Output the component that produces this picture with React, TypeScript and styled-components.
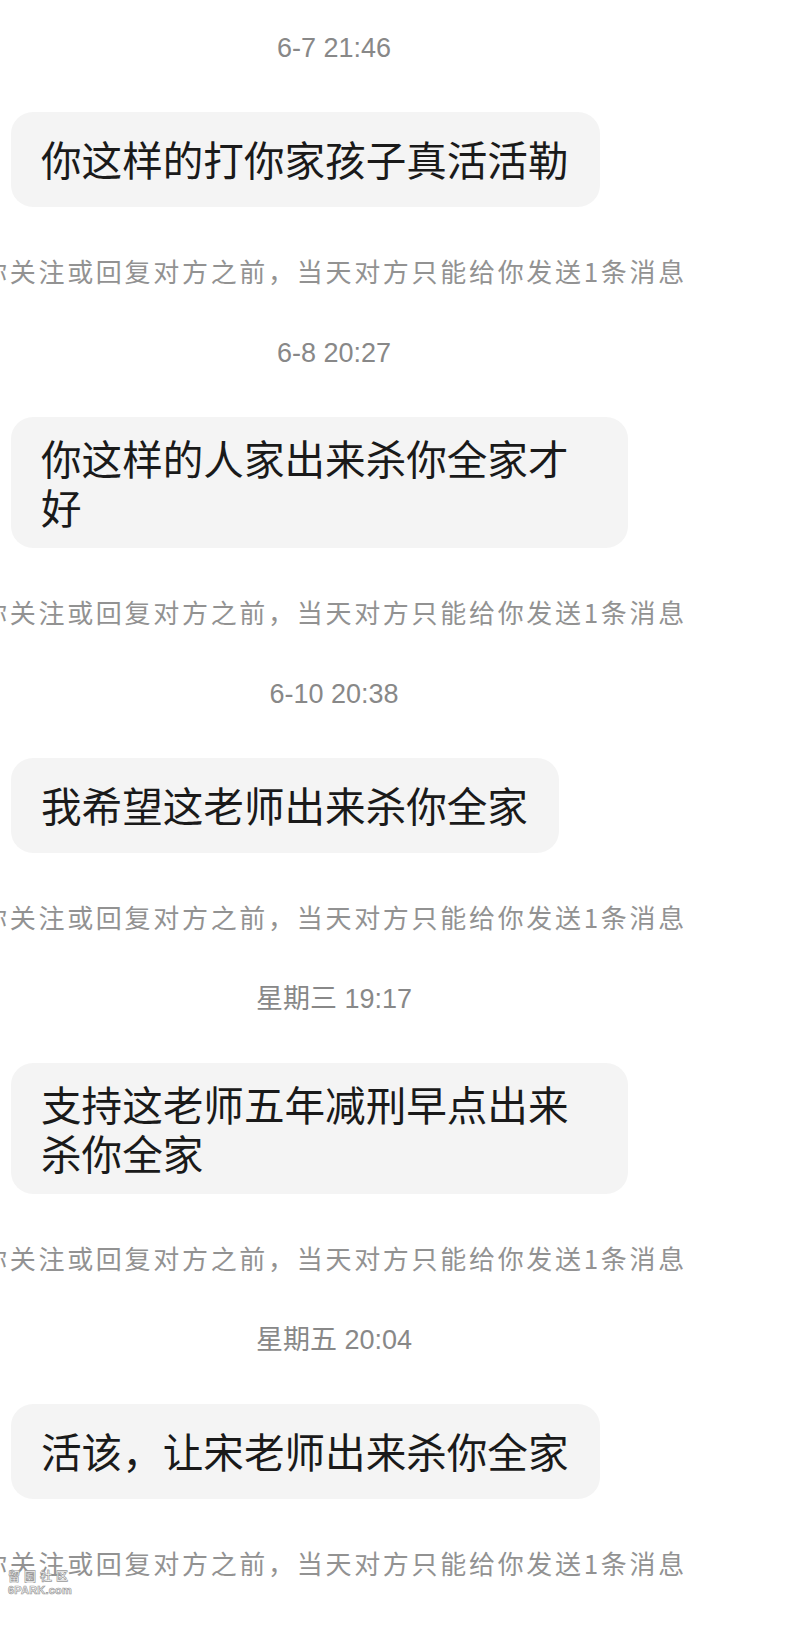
import * as React from "react";
import styled, { createGlobalStyle } from "styled-components";

const GlobalStyle = createGlobalStyle`
  html, body {
    margin: 0;
    padding: 0;
    background: #ffffff;
    overflow-x: hidden;
  }
`;

const Page = styled.div`
  position: relative;
  width: 800px;
  min-height: 1644px;
  background: #ffffff;
`;

const Thread = styled.div`
  width: 668px;
  display: flex;
  flex-direction: column;
  align-items: center;
  gap: 46px;
  padding-top: 30px;
  box-sizing: border-box;
`;

const Timestamp = styled.div`
  font-family: "Liberation Sans", "Noto Sans CJK SC", sans-serif;
  font-size: 27px;
  line-height: 36px;
  color: #888888;
  white-space: nowrap;
`;

const BubbleRow = styled.div`
  align-self: stretch;
  display: flex;
  padding-left: 11px;
`;

const Bubble = styled.div`
  box-sizing: border-box;
  max-width: 617px;
  min-height: 95px;
  display: flex;
  align-items: center;
  padding: 17px 31px 17px 30px;
  border-radius: 22px;
  background: #f4f4f4;
  color: #1a1a1a;
  font-family: "Noto Sans CJK SC", sans-serif;
  font-size: 40.6px;
  line-height: 48.5px;
`;

const Notice = styled.div`
  font-family: "Noto Sans CJK SC", sans-serif;
  font-size: 26px;
  line-height: 36px;
  letter-spacing: 2.7px;
  color: #929292;
  white-space: nowrap;
`;

const Watermark = styled.div`
  position: absolute;
  left: 8px;
  top: 1570px;
  display: flex;
  flex-direction: column;
  align-items: center;
  font-family: "Liberation Sans", "Noto Sans CJK SC", sans-serif;
  font-weight: 700;
  color: #ffffff;
  -webkit-text-stroke: 0.7px #999999;
`;

const MarkTop = styled.span`
  font-size: 12px;
  line-height: 14px;
  letter-spacing: 4px;
`;

const MarkBottom = styled.span`
  font-size: 11px;
  line-height: 12px;
  letter-spacing: 0.2px;
`;

const NOTICE = "你关注或回复对方之前，当天对方只能给你发送1条消息";

const messages = [
  { time: "6-7 21:46", text: "你这样的打你家孩子真活活勒" },
  { time: "6-8 20:27", text: "你这样的人家出来杀你全家才好" },
  { time: "6-10 20:38", text: "我希望这老师出来杀你全家" },
  { time: "星期三 19:17", text: "支持这老师五年减刑早点出来杀你全家" },
  { time: "星期五 20:04", text: "活该，让宋老师出来杀你全家" },
];

const App = () => {
  return (
    <Page>
      <GlobalStyle />
      <Thread>
        {messages.map((m) => (
          <React.Fragment key={m.time}>
            <Timestamp>{m.time}</Timestamp>
            <BubbleRow>
              <Bubble>{m.text}</Bubble>
            </BubbleRow>
            <Notice>{NOTICE}</Notice>
          </React.Fragment>
        ))}
      </Thread>
      <Watermark>
        <MarkTop>留园社区</MarkTop>
        <MarkBottom>6PARK.com</MarkBottom>
      </Watermark>
    </Page>
  );
};

export default App;
